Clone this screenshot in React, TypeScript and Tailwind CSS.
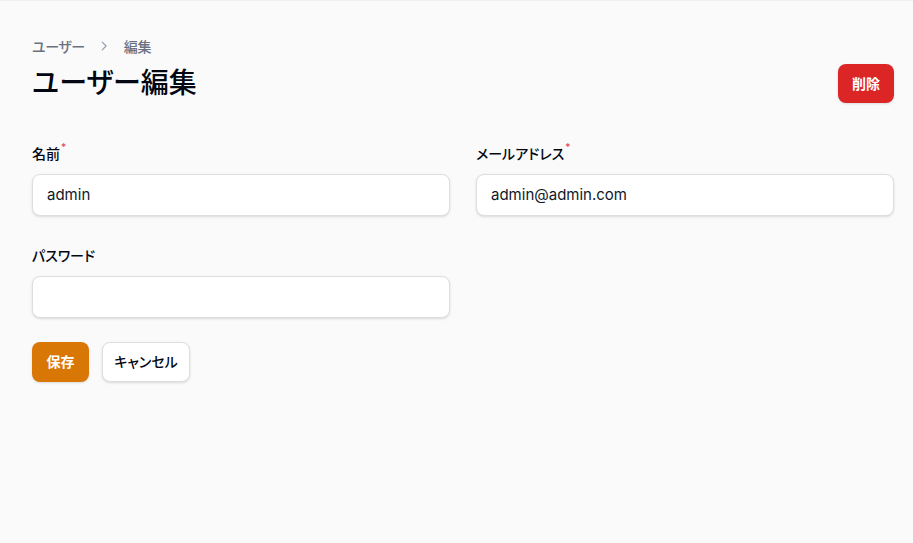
import React from "react";

const font = {
  fontFamily: 'Inter, "Noto Sans CJK JP", sans-serif',
};

function Field({ label, required, value, type = "text" }: { label: string; required?: boolean; value?: string; type?: string }) {
  return (
    <div className="flex flex-col">
      <label className="text-sm font-medium text-gray-950 h-[24px] flex items-start leading-6">
        <span>{label}</span>
        {required && <sup className="text-[#e5484d] text-[10px] font-medium ml-[1px] top-[-2px] relative leading-none mt-[2px]">*</sup>}
      </label>
      <div className="mt-[8px] h-[42px] rounded-lg bg-white border border-[#dedede] shadow-sm flex items-center px-[14px]">
        <input
          type={type}
          defaultValue={value}
          className="w-full bg-transparent outline-none text-[15px] text-gray-900"
          style={font}
        />
      </div>
    </div>
  );
}

export default function App() {
  return (
    <div
      className="min-h-[543px] bg-[#fafafa] border-t border-[#efefef] [font-feature-settings:'palt']"
      style={font}
    >
      <div className="pl-[32px] pr-[19px] pt-[33px]">
        <nav className="flex items-center gap-[12px] text-[14px] tracking-[-0.4px] font-medium text-gray-500 h-[24px]">
          <span>ユーザー</span>
          <svg width="14" height="14" viewBox="0 0 20 20" fill="none" className="text-gray-400">
            <path d="M7.5 4.5L13 10l-5.5 5.5" stroke="currentColor" strokeWidth="1.8" strokeLinecap="round" strokeLinejoin="round" />
          </svg>
          <span className="ml-[1px]">編集</span>
        </nav>
        <div className="flex items-center justify-between mt-[4px]">
          <h1 className="text-[28px] font-medium text-gray-950 leading-[40px]">ユーザー編集</h1>
          <button className="h-[39px] px-[14px] rounded-lg bg-[#dc2626] text-white text-sm font-semibold shadow-sm mt-[2px]">
            削除
          </button>
        </div>
        <div className="grid grid-cols-2 gap-x-[26px] gap-y-[28px] mt-[39px]">
          <Field label="名前" required value="admin" />
          <Field label="メールアドレス" required value="admin@admin.com" />
          <Field label="パスワード" type="password" />
        </div>
        <div className="flex gap-[13px] mt-[24px]">
          <button className="h-[40px] w-[57px] rounded-lg bg-[#d97706] text-white text-sm font-semibold shadow-sm">
            保存
          </button>
          <button className="h-[40px] w-[88px] rounded-lg bg-white border border-[#dedede] text-gray-950 text-sm font-medium shadow-sm">
            キャンセル
          </button>
        </div>
      </div>
    </div>
  );
}
